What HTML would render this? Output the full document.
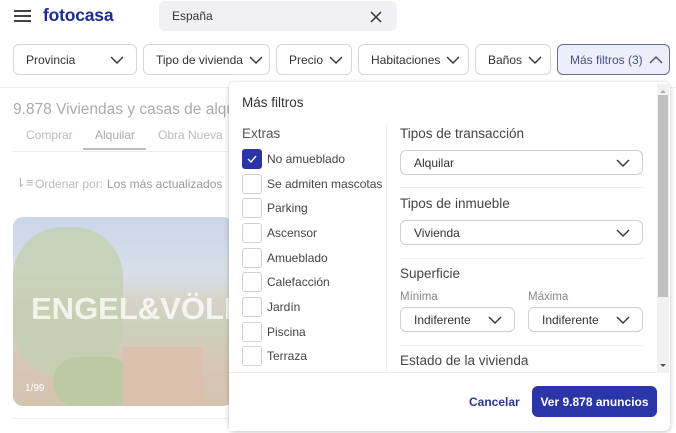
<!DOCTYPE html>
<html><head><meta charset="utf-8"><style>
*{box-sizing:border-box;margin:0;padding:0}
body{width:676px;height:433px;overflow:hidden;background:#fff;font-family:"Liberation Sans",sans-serif;color:#333;position:relative}
.a{position:absolute;white-space:nowrap}
.btn{position:absolute;top:44px;height:31px;border:1px solid #d6d6dc;border-radius:6px;font-size:12px;color:#333;display:flex;align-items:center;padding:0 12px;justify-content:space-between;background:#fff;white-space:nowrap}
.chev{width:14px;height:8px;flex:none;margin-left:6px}
.cb{position:absolute;left:242px;width:20px;height:20px;border:1px solid #cfcfd4;border-radius:3px;background:#fff}
.lb{position:absolute;left:267px;font-size:12px;color:#444;white-space:nowrap}
.sel{position:absolute;height:25px;border:1px solid #cfcfd4;border-radius:6px;font-size:12px;color:#333;display:flex;align-items:center;justify-content:space-between;padding:0 12px 0 13px;background:#fff}
.h{position:absolute;left:400px;font-size:13.5px;color:#444}
.sm{position:absolute;font-size:11.5px;color:#888}
.hr{position:absolute;left:400px;width:244px;height:1px;background:#eee}
</style></head><body>
<div class="a" style="left:14px;top:10px;width:17px;height:2px;background:#444;box-shadow:0 5px 0 #444,0 10px 0 #444"></div>
<div class="a" style="left:43px;top:5px;font-size:17.5px;font-weight:bold;color:#1f2b8f;letter-spacing:-0.2px">fotocasa</div>
<div class="a" style="left:159px;top:1px;width:238px;height:30px;background:#f1f1f3;border-radius:6px"></div>
<div class="a" style="left:172px;top:9px;font-size:12px;color:#333">España</div>
<svg class="a" style="left:370px;top:11px" width="12" height="12"><path d="M1 1L11 11M11 1L1 11" stroke="#333" stroke-width="1.5"/></svg>
<div class="btn" style="left:13px;width:124px">Provincia<svg class="chev" viewBox="0 0 14 8"><path d="M1 1l6 6 6-6" stroke="#333" fill="none" stroke-width="1.4"/></svg></div>
<div class="btn" style="left:143px;width:127px">Tipo de vivienda<svg class="chev" viewBox="0 0 14 8"><path d="M1 1l6 6 6-6" stroke="#333" fill="none" stroke-width="1.4"/></svg></div>
<div class="btn" style="left:276px;width:76px">Precio<svg class="chev" viewBox="0 0 14 8"><path d="M1 1l6 6 6-6" stroke="#333" fill="none" stroke-width="1.4"/></svg></div>
<div class="btn" style="left:358px;width:111px">Habitaciones<svg class="chev" viewBox="0 0 14 8"><path d="M1 1l6 6 6-6" stroke="#333" fill="none" stroke-width="1.4"/></svg></div>
<div class="btn" style="left:475px;width:76px">Baños<svg class="chev" viewBox="0 0 14 8"><path d="M1 1l6 6 6-6" stroke="#333" fill="none" stroke-width="1.4"/></svg></div>
<div class="btn" style="left:557px;width:113px;background:#eceefa;border-color:#6a6f98;color:#4a4f80">Más filtros (3)<svg class="chev" viewBox="0 0 14 8"><path d="M1 7l6-6 6 6" stroke="#4a4f80" fill="none" stroke-width="1.4"/></svg></div>
<div class="a" style="left:0;top:87px;width:676px;height:1px;background:#eee"></div>
<div class="a" style="left:13px;top:101px;font-size:15.5px;color:#aaa">9.878 Viviendas y casas de alquiler</div>
<div class="a" style="left:26px;top:128px;font-size:12px;color:#bbb">Comprar</div>
<div class="a" style="left:95px;top:128px;font-size:12px;color:#aaa">Alquilar</div>
<div class="a" style="left:83px;top:148px;width:63px;height:2px;background:#b8bccc"></div>
<div class="a" style="left:158px;top:128px;font-size:12px;color:#bbb">Obra Nueva</div>
<div class="a" style="left:13px;top:151px;width:216px;height:1px;background:#eee"></div>
<div class="a" style="left:15px;top:175px;font-size:13px;color:#bbb">⇂≡</div>
<div class="a" style="left:35px;top:177px;font-size:12px;color:#bbb">Ordenar por:</div>
<div class="a" style="left:107px;top:177px;font-size:12px;color:#999">Los más actualizados</div>
<div class="a" style="left:13px;top:217px;width:220px;height:189px;border-radius:10px;overflow:hidden;background:linear-gradient(180deg,#c9d6ea 0%,#d8dfe8 30%,#d6d3c8 45%,#cdd0bd 60%,#d8c5b3 80%,#d2c5b0 100%)">
<div class="a" style="left:0;top:10px;width:110px;height:150px;background:#c3cfb0;border-radius:50px;opacity:.8"></div>
<div class="a" style="left:40px;top:140px;width:80px;height:50px;background:#bccaa4;border-radius:30px"></div>
<div class="a" style="left:110px;top:130px;width:80px;height:60px;background:#dbc1ad"></div>
<div class="a" style="left:18px;top:74px;font-size:31px;font-weight:bold;color:rgba(255,255,255,.75)">ENGEL&amp;VÖLK</div>
<div class="a" style="left:12px;top:166px;font-size:10px;color:#fff">1/99</div>
</div>
<div class="a" style="left:13px;top:418px;width:220px;height:1px;background:#eee"></div>
<div class="a" style="left:229px;top:82px;width:441px;height:349px;background:#fff;border-radius:6px;box-shadow:0 1px 5px rgba(0,0,0,.25)"></div>
<div class="a" style="left:657px;top:84px;width:12px;height:289px;background:#f1f1f1"></div>
<div class="a" style="left:658px;top:95px;width:10px;height:202px;background:#c1c1c1"></div>
<div class="a" style="left:660px;top:87px;border:3px solid transparent;border-bottom:3px solid #aaa"></div>
<div class="a" style="left:660px;top:364px;border:3px solid transparent;border-top:3px solid #555"></div>
<div class="a" style="left:242px;top:95px;font-size:13.5px;color:#333">Más filtros</div>
<div class="a" style="left:242px;top:126px;font-size:13.5px;color:#555">Extras</div>
<div class="cb" style="top:149px;background:#2b35a8;border-color:#2b35a8"><svg width="18" height="18" style="position:absolute;left:0;top:0"><path d="M5 9l3 3 5-6" stroke="#fff" fill="none" stroke-width="1.4"/></svg></div>
<div class="lb" style="top:152px">No amueblado</div>
<div class="cb" style="top:174px"></div><div class="lb" style="top:177px">Se admiten mascotas</div>
<div class="cb" style="top:198px"></div><div class="lb" style="top:201px">Parking</div>
<div class="cb" style="top:223px"></div><div class="lb" style="top:226px">Ascensor</div>
<div class="cb" style="top:248px"></div><div class="lb" style="top:251px">Amueblado</div>
<div class="cb" style="top:272px"></div><div class="lb" style="top:275px">Calefacción</div>
<div class="cb" style="top:297px"></div><div class="lb" style="top:300px">Jardín</div>
<div class="cb" style="top:322px"></div><div class="lb" style="top:325px">Piscina</div>
<div class="cb" style="top:346px"></div><div class="lb" style="top:349px">Terraza</div>
<div class="a" style="left:386px;top:125px;width:1px;height:247px;background:#f0f0f0"></div>
<div class="h" style="top:126px">Tipos de transacción</div>
<div class="sel" style="left:400px;top:150px;width:243px">Alquilar<svg class="chev" viewBox="0 0 14 8"><path d="M1 1l6 6 6-6" stroke="#333" fill="none" stroke-width="1.4"/></svg></div>
<div class="hr" style="top:187px"></div>
<div class="h" style="top:196px">Tipos de inmueble</div>
<div class="sel" style="left:400px;top:220px;width:243px">Vivienda<svg class="chev" viewBox="0 0 14 8"><path d="M1 1l6 6 6-6" stroke="#333" fill="none" stroke-width="1.4"/></svg></div>
<div class="hr" style="top:258px"></div>
<div class="h" style="top:266px">Superficie</div>
<div class="sm" style="left:400px;top:291px">Mínima</div>
<div class="sm" style="left:528px;top:291px">Máxima</div>
<div class="sel" style="left:400px;top:307px;width:115px">Indiferente<svg class="chev" viewBox="0 0 14 8"><path d="M1 1l6 6 6-6" stroke="#333" fill="none" stroke-width="1.4"/></svg></div>
<div class="sel" style="left:528px;top:307px;width:115px">Indiferente<svg class="chev" viewBox="0 0 14 8"><path d="M1 1l6 6 6-6" stroke="#333" fill="none" stroke-width="1.4"/></svg></div>
<div class="hr" style="top:345px"></div>
<div class="h" style="top:353px">Estado de la vivienda</div>
<div class="a" style="left:229px;top:372px;width:428px;height:59px;background:#fff;border-top:1px solid #eee"></div>
<div class="a" style="left:469px;top:395px;font-size:12px;font-weight:bold;color:#2b3590">Cancelar</div>
<div class="a" style="left:532px;top:386px;width:125px;height:31px;background:#2b35a8;border-radius:6px;color:#fff;font-size:12px;font-weight:bold;display:flex;align-items:center;justify-content:center">Ver 9.878 anuncios</div>
</body></html>
